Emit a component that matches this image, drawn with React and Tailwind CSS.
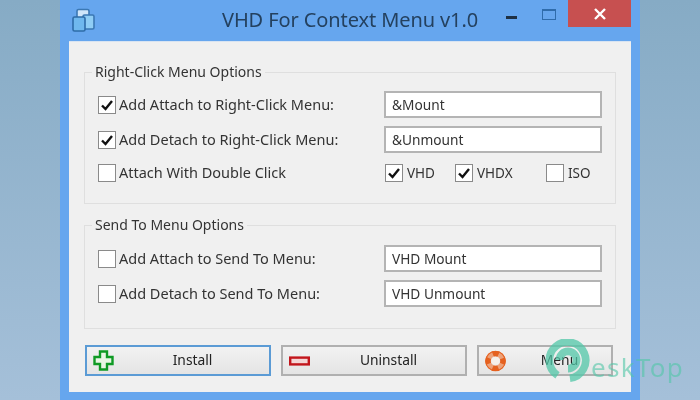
const font = { fontFamily: '"Noto Sans", sans-serif' };

function Check({ checked, label, className = 'gap-[3px]' }) {
  return (
    <label className={`flex items-center ${className}`}>
      <span className="flex h-[18px] w-[18px] shrink-0 items-center justify-center border border-[#8a8a8a] bg-white">
        {checked && (
          <svg width="14" height="14" viewBox="0 0 14 14">
            <path d="M2 7.5 L5.5 11 L12 3" fill="none" stroke="#111" strokeWidth="2.4" />
          </svg>
        )}
      </span>
      <span className="whitespace-nowrap">{label}</span>
    </label>
  );
}

function Field({ value }) {
  return (
    <div className="flex h-[27px] w-[218px] items-center border-2 border-[#b4b4b4] bg-white px-[6px] pt-[1px] text-[13.7px] text-[#333]">
      {value}
    </div>
  );
}

function Row({ checked, label, value }) {
  return (
    <div className="flex h-[27px] items-center justify-between">
      <Check checked={checked} label={label} />
      <Field value={value} />
    </div>
  );
}

function Group({ title, children, className }) {
  return (
    <fieldset className={`border border-[#dfdfdf] px-[13px] ${className}`}>
      <legend className="ml-[-6px] h-[18px] px-[3px] text-[14px] leading-[18px] text-[#333]">{title}</legend>
      {children}
    </fieldset>
  );
}

function Btn({ icon, label, className = '' }) {
  return (
    <button className={`flex h-[31px] items-center border-2 bg-gradient-to-b from-[#f2f2f2] to-[#e4e4e4] pl-[6px] text-[13.8px] text-[#222] ${className}`}>
      <span className="flex h-[22px] w-[21px] shrink-0 items-center justify-center">{icon}</span>
      <span className="flex-1 pl-[2px] text-center">{label}</span>
    </button>
  );
}

function AppIcon() {
  return (
    <svg width="26" height="26" viewBox="0 0 26 26">
      <rect x="6" y="1.5" width="12" height="12" rx="1.5" fill="#cfe6fa" stroke="#3b78b4" strokeWidth="1.6" />
      <rect x="12" y="7" width="11" height="14" rx="1.5" fill="#8fcdf5" stroke="#3b78b4" strokeWidth="1.6" />
      <rect x="2" y="9" width="12" height="14" rx="1.5" fill="#6fb8ee" stroke="#2e6ca8" strokeWidth="1.6" />
    </svg>
  );
}

function PlusIcon() {
  return (
    <svg width="21" height="21" viewBox="0 0 21 21">
      <path d="M7 1.5 H14 V7 H19.5 V14 H14 V19.5 H7 V14 H1.5 V7 H7 Z" fill="#e8f6e4" stroke="#0f9a24" strokeWidth="2.4" />
    </svg>
  );
}

function MinusIcon() {
  return (
    <svg width="21" height="10" viewBox="0 0 21 10">
      <rect x="1.2" y="1.6" width="18.6" height="6.8" fill="#f3d6d6" stroke="#c2161c" strokeWidth="2.4" />
    </svg>
  );
}

function BuoyIcon() {
  return (
    <svg width="22" height="22" viewBox="0 0 22 22">
      <circle cx="11" cy="11" r="7.8" fill="none" stroke="#eda27a" strokeWidth="5.6" />
      <circle cx="11" cy="11" r="7.8" fill="none" stroke="#e5611f" strokeWidth="5.6" strokeDasharray="6.2 6.05" strokeDashoffset="3.1" />
      <circle cx="11" cy="11" r="10.2" fill="none" stroke="#e5611f" strokeWidth="1.2" />
      <circle cx="11" cy="11" r="4" fill="#f6efe9" />
    </svg>
  );
}

export default function App() {
  return (
    <div
      className="relative flex h-[400px] w-[700px] justify-center overflow-hidden bg-gradient-to-b from-[#86abc5] to-[#a5c0d9] blur-[0.5px]"
      style={font}
    >
      <div className="flex w-[580px] flex-col bg-[#66a6ee] text-[14.5px] text-[#333]">
        {/* title bar */}
        <div className="grid h-[41px] shrink-0 grid-cols-[1fr_auto_1fr] items-start">
          <div className="pt-[8px] pl-[11px]">
            <AppIcon />
          </div>
          <div className="pt-[6px] text-[20px] leading-[28px] tracking-[-0.1px] text-[#24415f]">VHD For Context Menu v1.0</div>
          <div className="flex items-start justify-end pr-[9px]">
            <div className="mt-[16px] h-[3px] w-[11px] bg-[#1f3144]" />
            <div className="mt-[9px] ml-[25px] h-[11px] w-[14px] border border-t-2 border-[#2f6cab]" />
            <div className="ml-[12px] flex h-[27px] w-[63px] items-center justify-center bg-[#c75050]">
              <svg width="12" height="12" viewBox="0 0 12 12">
                <path d="M1 1 L11 11 M11 1 L1 11" stroke="#fff" strokeWidth="2.4" />
              </svg>
            </div>
          </div>
        </div>

        {/* client area */}
        <div className="mx-[9px] mb-[8px] flex flex-1 flex-col border-t border-[#d8e4f2] bg-[#f0f0f0] px-[15px] pt-[21px]">
          <Group title="Right-Click Menu Options" className="pt-[10px] pb-[18px]">
            <div className="flex flex-col gap-[8px]">
              <Row checked label="Add Attach to Right-Click Menu:" value="&Mount" />
              <Row checked label="Add Detach to Right-Click Menu:" value="&Unmount" />
              <div className="flex h-[24px] items-center justify-between">
                <Check label="Attach With Double Click" />
                <div className="flex w-[217px] text-[13.5px]">
                  <Check checked label="VHD" className="w-[70px] gap-[4px]" />
                  <Check checked label="VHDX" className="w-[91px] gap-[4px]" />
                  <Check label="ISO" className="gap-[4px]" />
                </div>
              </div>
            </div>
          </Group>

          <Group title="Send To Menu Options" className="mt-[12px] pt-[11px] pb-[21px]">
            <div className="flex flex-col gap-[8px]">
              <Row label="Add Attach to Send To Menu:" value="VHD Mount" />
              <Row label="Add Detach to Send To Menu:" value="VHD Unmount" />
            </div>
          </Group>

          <div className="mt-[16px] ml-[1px] flex gap-[10px]">
            <Btn icon={<PlusIcon />} label="Install" className="w-[186px] border-[#5b9bd5]" />
            <Btn icon={<MinusIcon />} label="Uninstall" className="w-[186px] border-[#b0b0b0]" />
            <Btn icon={<BuoyIcon />} label="Menu" className="w-[136px] border-[#b0b0b0]" />
          </div>
        </div>
      </div>

      {/* watermark */}
      <div className="absolute top-[339px] left-[545px] flex items-start">
        <svg width="46" height="44" viewBox="0 0 48 46" className="opacity-75">
          <path
            d="M13 38 A19 19 0 1 1 26 41 M24 31 A9 9 0 1 0 15 22"
            fill="none"
            stroke="#52c7a8"
            strokeWidth="8"
          />
        </svg>
        <span className="mt-[10px] text-[26px] leading-[36px] tracking-[1.3px] text-[#52c7a8] opacity-60">eskTop</span>
      </div>
    </div>
  );
}
